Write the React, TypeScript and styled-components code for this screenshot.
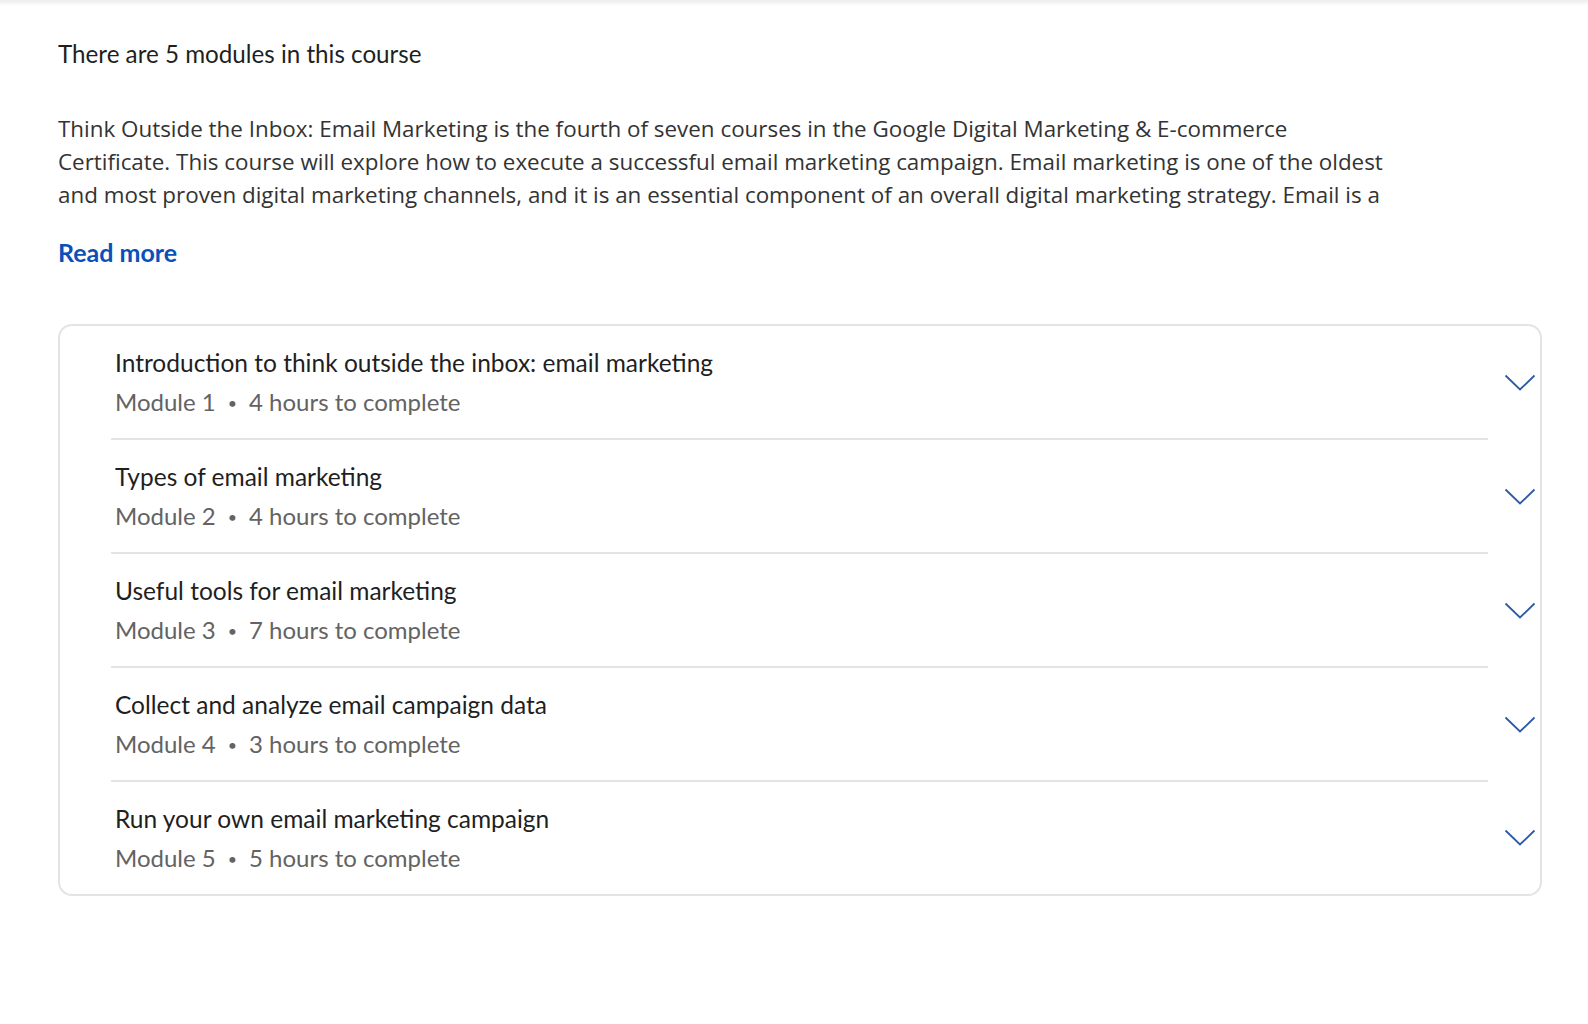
import React from "react";
import styled, { createGlobalStyle } from "styled-components";

const GlobalStyle = createGlobalStyle`
  html, body {
    margin: 0;
    padding: 0;
    background: #ffffff;
  }
  body {
    font-family: Lato, "Open Sans", sans-serif;
    color: #1f1f1f;
  }
`;

const modules = [
  { title: "Introduction to think outside the inbox: email marketing", hours: 4 },
  { title: "Types of email marketing", hours: 4 },
  { title: "Useful tools for email marketing", hours: 7 },
  { title: "Collect and analyze email campaign data", hours: 3 },
  { title: "Run your own email marketing campaign", hours: 5 },
];

const Chevron = () => (
  <svg width="32" height="20" viewBox="0 0 32 20" fill="none">
    <path d="M1.5 2.5 L16 16.5 L30.5 2.5" stroke="#2c5aa5" strokeWidth="1.8" />
  </svg>
);

const App = () => {
  return (
    <>
      <GlobalStyle />
      <Page>
        <Heading>There are 5 modules in this course</Heading>
        <Description>
          Think Outside the Inbox: Email Marketing is the fourth of seven courses in the Google
          Digital Marketing &amp; E-commerce Certificate. This course will explore how to execute a
          successful email marketing campaign. Email marketing is one of the oldest and most proven
          digital marketing channels, and it is an essential component of an overall digital
          marketing strategy. Email is a
        </Description>
        <ReadMore href="#">Read more</ReadMore>
        <Card>
          {modules.map((m, i) => (
            <Row key={m.title}>
              <RowBody $last={i === modules.length - 1}>
                <Title>{m.title}</Title>
                <Meta>
                  Module {i + 1}
                  <Dot>•</Dot>
                  {m.hours} hours to complete
                </Meta>
              </RowBody>
              <Toggle>
                <Chevron />
              </Toggle>
            </Row>
          ))}
        </Card>
      </Page>
    </>
  );
};

const Page = styled.div`
  min-height: 1024px;
  box-sizing: border-box;
  padding: 34px 46px 0 58px;
  background: linear-gradient(#ececec 0px, #ffffff 6px);
`;

const Heading = styled.h2`
  margin: 0;
  font-size: 24.2px;
  font-weight: 400;
  line-height: 40px;
  color: #1f1f1f;
`;

const Description = styled.p`
  margin: 38px 0 0;
  max-width: 1334px;
  font-family: "Open Sans", sans-serif;
  font-size: 22.4px;
  line-height: 33px;
  color: #333333;
`;

const ReadMore = styled.a`
  display: inline-block;
  margin-top: 24px;
  font-size: 25px;
  font-weight: 700;
  line-height: 34px;
  color: #0b4fb8;
  text-decoration: none;
`;

const Card = styled.div`
  margin-top: 55px;
  border: 2px solid #e3e4e5;
  border-radius: 14px;
  background: #fff;
`;

const Row = styled.div`
  display: flex;
  align-items: stretch;
  padding-left: 51px;
`;

const RowBody = styled.div<{ $last: boolean }>`
  flex: 1;
  padding: 18px 0 16px 4px;
  border-bottom: ${(p) => (p.$last ? "none" : "2px solid #e3e4e5")};
`;

const Title = styled.div`
  font-size: 24.5px;
  line-height: 37px;
  color: #1f1f1f;
`;

const Meta = styled.div`
  margin-top: 2px;
  font-size: 24px;
  line-height: 38px;
  color: #636363;
`;

const Dot = styled.span`
  display: inline-block;
  margin: 0 12px;
  font-size: 16px;
  vertical-align: 2px;
`;

const Toggle = styled.div`
  width: 52px;
  display: flex;
  align-items: center;
  justify-content: flex-start;
  padding-left: 16px;
  box-sizing: border-box;
`;

export default App;
